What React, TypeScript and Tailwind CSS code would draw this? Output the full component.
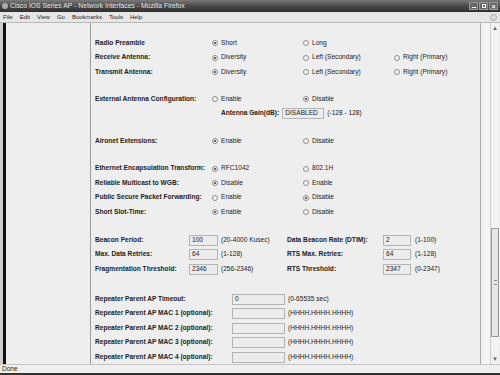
import React from "react";

const font = { fontFamily: '"Liberation Sans", Arial, sans-serif' };

function Radio({ checked }: { checked?: boolean }) {
  return (
    <span className="w-[6px] h-[6px] rounded-full border border-[#8a8a8a] bg-[#f7f7f7] flex items-center justify-center shrink-0">
      {checked && <span className="w-[2px] h-[2px] rounded-full bg-[#333]" />}
    </span>
  );
}

function Opt({ label, checked }: { label: string; checked?: boolean }) {
  return (
    <div className="flex items-center gap-[3px]">
      <Radio checked={checked} />
      <span>{label}</span>
    </div>
  );
}

type RadioRowProps = {
  label: string;
  opts: { label: string; checked?: boolean }[];
};

function RadioRow({ label, opts }: RadioRowProps) {
  return (
    <div className="grid grid-cols-[117px_91px_91px_auto] h-[14.5px] items-center">
      <span className="font-bold">{label}</span>
      {opts.map((o) => (
        <Opt key={o.label} label={o.label} checked={o.checked} />
      ))}
    </div>
  );
}

function Field({ value, w }: { value?: string; w: string }) {
  return (
    <div className={`${w} h-[11px] border border-[#b4b4b4] bg-[#ececec] px-[2px] flex items-center leading-none`}>
      {value}
    </div>
  );
}

function Spacer({ h }: { h: string }) {
  return <div className={h} />;
}

const menus = ["File", "Edit", "View", "Go", "Bookmarks", "Tools", "Help"];

export default function App() {
  return (
    <div className="w-[500px] h-[375px] flex flex-col bg-[#eeeeee] text-[#222] overflow-hidden" style={font}>
      {/* Title bar */}
      <div className="h-[12px] flex items-center justify-between bg-gradient-to-b from-[#7a7a7a] via-[#4a4a4a] to-[#2e2e2e] px-[2px]">
        <div className="flex items-center gap-[2px] text-[6.8px] text-[#e4e4e4] leading-none">
          <span className="w-[6px] h-[6px] rounded-full bg-[#aaa]" />
          <span>Cisco IOS Series AP - Network Interfaces - Mozilla Firefox</span>
        </div>
        <div className="flex gap-[1px]">
          <div className="w-[9px] h-[8px] border border-[#999] bg-[#666] flex items-end justify-center pb-[1px]">
            <span className="w-[4px] h-[1px] bg-white" />
          </div>
          <div className="w-[9px] h-[8px] border border-[#999] bg-[#666] flex items-center justify-center">
            <span className="w-[4px] h-[4px] border border-white" />
          </div>
          <div className="w-[9px] h-[8px] border border-[#999] bg-[#666] flex items-center justify-center text-[7px] leading-none text-white font-bold">
            ×
          </div>
        </div>
      </div>
      {/* Menu bar */}
      <div className="h-[11px] flex items-center justify-between bg-[#e6e6e6] border-b border-[#b8b8b8] pl-[3px] pr-[3px]">
        <div className="flex gap-[7px] text-[6px] leading-none text-[#222]">
          {menus.map((m) => (
            <span key={m}>{m}</span>
          ))}
        </div>
        <span className="w-[7px] h-[7px] rounded-full border border-[#aaa] bg-[#ddd]" />
      </div>
      {/* Body */}
      <div className="h-[341px] flex">
        <div className="w-[3px] bg-[#cfcfcf]" />
        <div className="w-[3px] bg-[#111]" />
        <div className="w-[85px] bg-[#eeeeee] border-r border-[#9a9a9a]" />
        <div className="w-[390px] border-r border-[#aaaaaa] pl-[4px] pt-[12.75px] text-[6.6px] leading-none">
          <RadioRow label="Radio Preamble" opts={[{ label: "Short", checked: true }, { label: "Long" }]} />
          <RadioRow
            label="Receive Antenna:"
            opts={[{ label: "Diversity", checked: true }, { label: "Left (Secondary)" }, { label: "Right (Primary)" }]}
          />
          <RadioRow
            label="Transmit Antenna:"
            opts={[{ label: "Diversity", checked: true }, { label: "Left (Secondary)" }, { label: "Right (Primary)" }]}
          />
          <Spacer h="h-[12.5px]" />
          <RadioRow
            label="External Antenna Configuration:"
            opts={[{ label: "Enable" }, { label: "Disable", checked: true }]}
          />
          <div className="h-[14.5px] flex items-center pl-[126px] gap-[3px]">
            <span className="font-bold">Antenna Gain(dB):</span>
            <Field value="DISABLED" w="w-[42px]" />
            <span>(-128 - 128)</span>
          </div>
          <Spacer h="h-[13px]" />
          <RadioRow label="Aironet Extensions:" opts={[{ label: "Enable", checked: true }, { label: "Disable" }]} />
          <Spacer h="h-[13px]" />
          <RadioRow
            label="Ethernet Encapsulation Transform:"
            opts={[{ label: "RFC1042", checked: true }, { label: "802.1H" }]}
          />
          <RadioRow label="Reliable Multicast to WGB:" opts={[{ label: "Disable", checked: true }, { label: "Enable" }]} />
          <RadioRow
            label="Public Secure Packet Forwarding:"
            opts={[{ label: "Enable" }, { label: "Disable", checked: true }]}
          />
          <RadioRow label="Short Slot-Time:" opts={[{ label: "Enable", checked: true }, { label: "Disable" }]} />
          <Spacer h="h-[13.5px]" />
          {[
            ["Beacon Period:", "100", "(20-4000 Kusec)", "Data Beacon Rate (DTIM):", "2", "(1-100)"],
            ["Max. Data Retries:", "64", "(1-128)", "RTS Max. Retries:", "64", "(1-128)"],
            ["Fragmentation Threshold:", "2346", "(256-2346)", "RTS Threshold:", "2347", "(0-2347)"],
          ].map((r) => (
            <div key={r[0]} className="grid grid-cols-[94px_29px_69px_96px_29px_auto] h-[14.5px] items-center">
              <span className="font-bold">{r[0]}</span>
              <Field value={r[1]} w="w-[29px]" />
              <span className="pl-[3px]">{r[2]}</span>
              <span className="font-bold">{r[3]}</span>
              <Field value={r[4]} w="w-[28px]" />
              <span className="pl-[3px]">{r[5]}</span>
            </div>
          ))}
          <Spacer h="h-[15.5px]" />
          {[
            ["Repeater Parent AP Timeout:", "0", "(0-65535 sec)"],
            ["Repeater Parent AP MAC 1 (optional):", "", "(HHHH.HHHH.HHHH)"],
            ["Repeater Parent AP MAC 2 (optional):", "", "(HHHH.HHHH.HHHH)"],
            ["Repeater Parent AP MAC 3 (optional):", "", "(HHHH.HHHH.HHHH)"],
            ["Repeater Parent AP MAC 4 (optional):", "", "(HHHH.HHHH.HHHH)"],
          ].map((r) => (
            <div key={r[0]} className="grid grid-cols-[137px_53px_auto] h-[14.5px] items-center">
              <span className="font-bold">{r[0]}</span>
              <Field value={r[1]} w="w-[53px]" />
              <span className="pl-[3px]">{r[2]}</span>
            </div>
          ))}
        </div>
        <div className="w-[9px] bg-[#f4f4f4]" />
        <div className="w-[9px] flex flex-col bg-[#f2f2f2] border-l border-[#d0d0d0]">
          <div className="h-[10px] flex items-center justify-center text-[6px] text-[#666] leading-none">▲</div>
          <div className="h-[195px]" />
          <div className="h-[109px] border border-[#9a9a9a] bg-[#e6e6e6] flex items-center justify-center">
            <span className="w-[3px] h-[5px] border-y border-[#888]" />
          </div>
          <div className="flex-1" />
          <div className="h-[10px] flex items-center justify-center text-[6px] text-[#666] leading-none">▼</div>
        </div>
      </div>
      {/* Status bar */}
      <div className="h-[9px] flex items-center border-t border-[#c4c4c4] bg-[#efefef] px-[2px] text-[6.5px] leading-none">
        Done
      </div>
      <div className="h-[2px] bg-[#333]" />
    </div>
  );
}
